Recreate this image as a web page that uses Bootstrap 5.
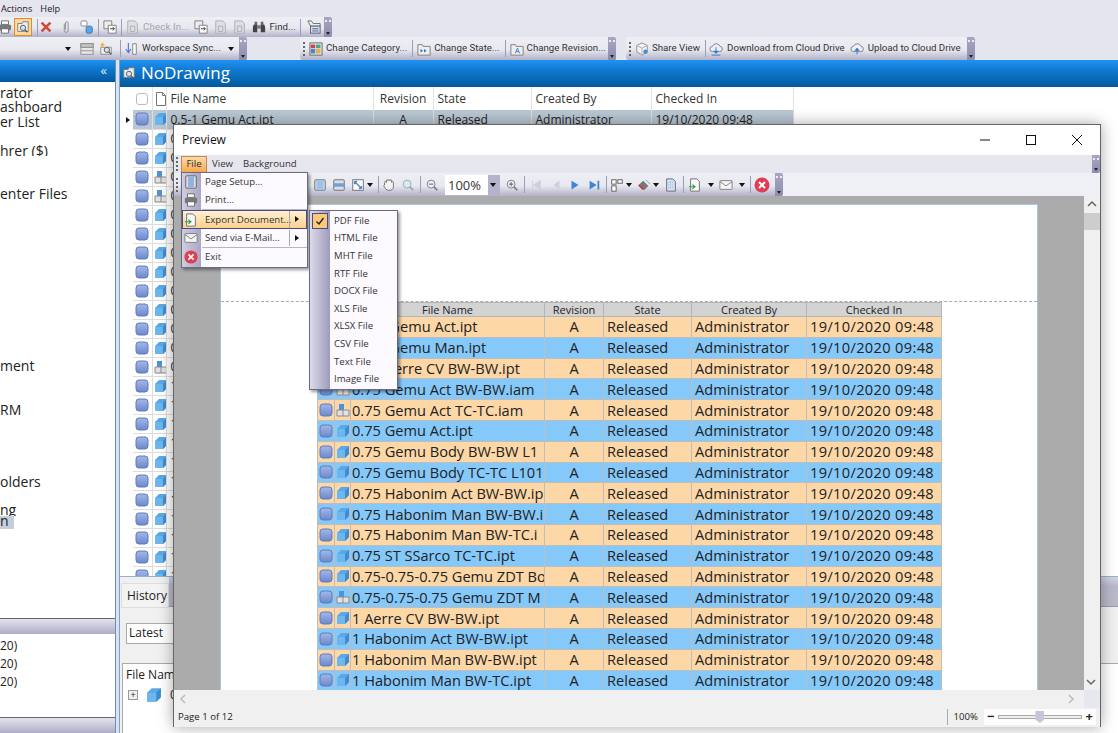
<!DOCTYPE html>
<html lang="en">
<head>
<meta charset="UTF-8">
<title>Preview</title>
<link href="https://cdn.jsdelivr.net/npm/bootstrap@5.3.3/dist/css/bootstrap.min.css" rel="stylesheet">
<style>
html, body { height: 733px; overflow: hidden; }
body { width: 1118px; background: #e5e5ef; font-family: "Open Sans", "Liberation Sans", sans-serif; font-size: 12px; color: #222; position: relative; }
svg { display: block; flex: none; }
.i16 { width: 16px; height: 16px; }
.i14 { width: 14px; height: 14px; }
.i12 { width: 12px; height: 12px; }
.i10 { width: 10px; height: 10px; }
.l1 { margin-left: 1px; } .l2 { margin-left: 2px; } .l3 { margin-left: 3px; } .l4 { margin-left: 4px; }
.l5 { margin-left: 5px; } .l6 { margin-left: 6px; } .l7 { margin-left: 7px; } .l9 { margin-left: 9px; }

/* top chrome */
.menu-top { height: 17px; font-size: 9.2px; padding-left: 1px; gap: 8px; }
.tool-row { height: 20px; }
.tool-row.second { height: 23px; }
.tbar { height: 100%; background: linear-gradient(#eeeef5 0, #e8e8f0 55%, #b3b1c9 100%); font-family: Roboto, "Liberation Sans", sans-serif; font-size: 9.7px; color: #333; white-space: nowrap; }
.tb-sep { width: 1px; height: 17px; background: #9d9db5; flex: none; }
.tb-over { width: 8px; height: 100%; background: linear-gradient(#a8a6c2, #8f8dae); position: relative; flex: none; border-radius: 0 2px 2px 0; }
.tb-over::before { content: ""; position: absolute; left: 1px; top: 3px; width: 6px; height: 2px; border-top: 2px dotted #eee; }
.tb-over::after { content: ""; position: absolute; left: 2px; bottom: 2px; border: 2px solid transparent; border-top: 3px solid #222; border-bottom: 0; }
.tb-grip { width: 2px; height: 14px; border-left: 2px dotted #666; flex: none; }
.tb-arrow { width: 0; height: 0; border: 3px solid transparent; border-top: 4px solid #111; border-bottom: 0; flex: none; }
.off { color: #a5a5a5; letter-spacing: .15px; }
.on-tool { width: 18px; height: 18px; background: #fcd9a0; border: 1px solid #e58a2c; display: flex; align-items: center; justify-content: center; flex: none; }
.bar-a { width: 332px; }
.bar-b { width: 247px; }
.bar-c { width: 316px; margin-left: 53px; border-radius: 3px 0 0 3px; }
.bar-d { width: 349px; margin-left: 10px; border-radius: 3px 0 0 3px; }
.bleed { margin-left: -2px; }
.far-in { margin-left: 65px; }
.push-end { margin-left: auto; }

/* main */
.workspace { height: 673px; background: #b9cbe0; }
.side { width: 116px; background: #fff; flex: none; border-right: 1px solid #6f8fb0; }
.blue-head { background: linear-gradient(#1f93f2 0, #0f78d0 40%, #03589c 100%); color: #fff; flex: none; }
.side-head { height: 22px; padding-right: 8px; font-size: 13px; color: #dbe9f7; }
.tree { height: 538px; overflow: hidden; font-size: 14px; padding-top: 2px; color: #222; white-space: nowrap; }
.tree div { height: 14.4px; line-height: 18px; overflow: hidden; }
.tree .picked { background: #c3d0dc; width: 14px; height: 13px; line-height: 10px; }
.lav-bar { height: 16px; background: linear-gradient(#e4e4ee, #aeacc6); border-top: 1px solid #666; flex: none; }
.recent { height: 83px; font-size: 12px; line-height: 18px; padding-top: 3px; }
.split { width: 3px; background: #d7e3f0; flex: none; }
.content { flex: 1; min-width: 0; background: #fff; border-left: 1px solid #7da0c4; }
.main-head { height: 27px; font-size: 17px; padding: 0 0 2px 2px; gap: 5px; }
.grid-zone { height: 489px; overflow: hidden; padding-left: 4px; }
.mtab { table-layout: fixed; width: 669px; font-size: 12px; }
.mtab th { font-weight: 400; height: 23px; border-right: 1px solid #e2e2e2; padding: 0 4px; color: #333; white-space: nowrap; overflow: hidden; }
.mtab td { height: 19px; padding: 0 4px; border-right: 1px solid #ddd; border-bottom: 1px solid #ddd; white-space: nowrap; overflow: hidden; line-height: 17px; }
.mtab td.ic, .mtab th.ic { padding: 0 1px; }
.mtab .rowmark { border: 0; padding: 0 2px; }
.mtab tr.sel td:not(.rowmark) { background: #b9c7d3; }
.mark-tri { width: 0; height: 0; border: 3.5px solid transparent; border-left: 4px solid #111; border-right: 0; }
.ctr { text-align: center; }
.box-blank { width: 12px; height: 12px; border: 1px solid #bbb; border-radius: 3px; margin: 0 auto; }
.hist { height: 157px; background: #f0f0f0; border-top: 1px solid #9bb0c8; position: relative; }
.hist-tabs { height: 30px; padding: 6px 0 0 1px; }
.hist-tab { width: 48px; height: 25px; background: #f3f3f3; border: 1px solid #ddd; padding-left: 5px; line-height: 24px; font-size: 12px; }
.strip { height: 30px; flex: 1; background: linear-gradient(#d5d5e2 0, #b9b9cc 30%, #b9b9cb 100%); border-bottom: 1px solid #9a9aaa; margin-top: -6px; }
.hist-select { width: 190px; height: 21px; margin: 16px 0 0 6px; background: #fff; border: 1px solid #aaa; padding-left: 2px; line-height: 18px; }
.hist-list { height: 71px; margin: 19px 0 0 2px; background: #fff; border: 1px solid #aaa; border-right: 0; padding: 2px 0 0 3px; }
.hist-row { gap: 8px; margin-top: 2px; margin-left: 2px; }
.plus-box { width: 10px; height: 10px; border: 1px solid #999; background: #eee; font-size: 9px; line-height: 7px; text-align: center; }

/* preview window, floats above the app */
.preview { left: 173px; top: 124px; width: 928px; height: 603px; background: #f0f0f0; border: 1px solid #666; border-bottom: 0; box-shadow: 0 0 14px rgba(0, 0, 0, .35); }
.win-title { height: 30px; background: #fff; font-size: 12px; padding-left: 8px; color: #111; }
.win-btn { width: 46px; justify-content: center; }
.win-menu { height: 18px; background: #e6e6ee; font-size: 9.6px; padding-left: 2px; position: relative; color: #333; }
.win-menu .grip { margin-right: 3px; }
.menu-on { width: 26px; height: 16px; background: linear-gradient(#fddba6, #f7a94f); border: 1px solid #b98b55; border-bottom: 0; text-align: center; line-height: 14px; }
.menu-word { padding: 0 5px; }
.win-menu .tb-over { position: absolute; right: 0; top: 0; height: 18px; }
.win-tools { height: 23px; background: #efeff6; }
.win-tools .tbar { width: 609px; padding-left: 2px; border-radius: 0 0 3px 0; }
.tools-first { margin-left: 135px; }
.combo { width: 55px; height: 20px; background: #fff; font-family: "Open Sans", sans-serif; font-size: 13px; line-height: 20px; padding-left: 3px; position: relative; }
.combo i { position: absolute; right: 0; top: 0; width: 12px; height: 20px; background: #b5b3cb; }
.combo i::after { content: ""; position: absolute; left: 2px; top: 8px; border: 3.5px solid transparent; border-top: 4px solid #111; border-bottom: 0; }
.viewport { height: 494px; background: #ababab; overflow: hidden; padding: 9px 0 0 47px; flex: 1; min-width: 0; }
.sheet { width: 816px; height: 600px; background: #fff; box-shadow: 0 0 0 1px #a9c4e4; }
.sheet-top { height: 97px; border-bottom: 1px dashed #aaa; }
.ptab { table-layout: fixed; width: 624px; margin-left: 96px; font-size: 14.6px; color: #222; border-left: 1px dashed #888; }
.ptab th { height: 14px; background: #d3d3d3; border: 1px solid #b5b5b5; font-size: 11px; font-weight: 400; text-align: center; line-height: 11px; padding: 0; }
.ptab td { height: 20.8px; border: 1px solid #bdbdbd; padding: 0 3px; white-space: nowrap; overflow: hidden; line-height: 19px; }
.ptab td.ic { padding: 0 1px; }
.ptab td.nm { padding: 0 0 0 1px; }
.ptab td.stamp { letter-spacing: .35px; }
.ptab tr.peach td { background: #fdd7a6; }
.ptab tr.sky td { background: #85c9fb; }
.vscroll { width: 16px; background: #f0f0f0; flex: none; position: relative; padding-top: 3px; }
.vthumb { height: 17px; background: #cdcdcd; margin-top: 4px; }
.vdown { position: absolute; bottom: 3px; left: 2px; }
.hscroll { height: 18px; background: #f0f0f0; }
.corner { width: 16px; height: 18px; background: #e6e8f0; }
.status { height: 18px; background: #f0f0f0; font-size: 9.6px; padding-left: 4px; color: #222; }
.zoom-zone { margin-left: auto; gap: 6px; padding-right: 4px; }
.zoom-vr { width: 1px; height: 16px; background: #aaa; }
.zoom-white { width: 112px; height: 16px; background: #fdfdfd; padding: 0 3px; gap: 4px; font-weight: 700; font-size: 13px; }
.track { flex: 1; height: 4px; border: 1px solid #aaa; background: #eee; position: relative; }
.thumb-z { position: absolute; left: 36px; top: -5px; width: 9px; height: 12px; background: #c6c6da; clip-path: polygon(0 0, 100% 0, 100% 70%, 50% 100%, 0 70%); }

/* drop menus */
.drop-file, .drop-export { display: block; --bs-dropdown-min-width: 0; padding: 0; margin: 0; border: 1px solid #6a6a80; border-radius: 0; background: #fcfaff; box-shadow: 2px 2px 3px rgba(0, 0, 0, .4); font-size: 9.6px; color: #333; }
.drop-file { left: 7px; top: 47px; width: 127px; height: 96px; background: linear-gradient(90deg, #cfcde0 0, #a9a7c3 19px, #fcfaff 19px); }
.drop-export { left: 135px; top: 85px; width: 89px; height: 180px; background: linear-gradient(90deg, #dcdbe8 0, #9d9bbb 20px, #fcfaff 20px); padding-top: 1px; }
.mrow { height: 18px; padding: 0 0 0 2px; gap: 7px; color: #333; position: relative; line-height: 18px; }
.mrow:hover { background: transparent; color: #333; }
.mrow.tall { height: 19px; }
.mrow.sub { height: 17.6px; padding-left: 24px; }
.mrow.hot { background: linear-gradient(#fff3d6, #fdce8c); box-shadow: inset 0 0 0 1px #4a4a8a; }
.mrow .nub { position: absolute; right: 8px; top: 6px; border: 3.5px solid transparent; border-left: 4px solid #111; border-right: 0; }
.mrow .cut { position: absolute; right: 17px; top: 1px; bottom: 1px; width: 1px; background: #aaa; }
.mline { height: 1px; background: #b5b5c5; margin-left: 20px; }
.tick { position: absolute; left: 2px; top: 1px; width: 16px; height: 16px; background: #fdc877; border: 1px solid #4a4a8a; display: flex; align-items: center; justify-content: center; }
</style>
</head>
<body class="d-flex flex-column">

<svg width="0" height="0" class="position-absolute">
  <defs>
    <linearGradient id="stGrad" x1="0" y1="0" x2="0" y2="1"><stop offset="0" stop-color="#a5b7e6"/><stop offset="1" stop-color="#6c88cc"/></linearGradient>
  </defs>
  <symbol id="st" viewBox="0 0 14 14"><rect x="1" y="1" width="12" height="12" rx="3" fill="url(#stGrad)" stroke="#5d7dbb"/></symbol>
  <symbol id="cube" viewBox="0 0 14 14"><path d="M1 5 5 1h8v8l-4 4H1z" fill="#5aa9e6"/><path d="M1 5h8v8H1z" fill="#6db7ee"/><path d="M9 5l4-4v8l-4 4z" fill="#3f8cd0"/></symbol>
  <symbol id="asm" viewBox="0 0 14 14"><rect x="3" y="1" width="5" height="6" fill="#4e93d8"/><path d="M1 7h12v6H1zM7 7v6" fill="#e2e2e2" stroke="#8a8a8a"/></symbol>
  <symbol id="doc" viewBox="0 0 14 14"><path d="M2.5.5h6l3 3v10h-9z" fill="#fff" stroke="#777"/><path d="M8.5.5v3h3" fill="none" stroke="#777"/></symbol>
  <symbol id="print" viewBox="0 0 16 16"><path d="M4 1h8v4H4z" fill="#fff" stroke="#666"/><rect x="1" y="5" width="14" height="7" rx="2" fill="#777"/><path d="M4 10h8v5H4z" fill="#fff" stroke="#666"/></symbol>
  <symbol id="find" viewBox="0 0 16 16"><path d="M2 4h5l1-2h6v11H2z" fill="#eee" stroke="#777"/><circle cx="8" cy="9" r="3" fill="#cfe3f5" stroke="#555"/><path d="M10 11l3 3" stroke="#555" stroke-width="1.5"/></symbol>
  <symbol id="redx" viewBox="0 0 16 16"><path d="M3 3l10 10M13 3 3 13" stroke="#d0483c" stroke-width="3"/></symbol>
  <symbol id="clip" viewBox="0 0 16 16"><path d="M6 4v8a2.200 2.200 0 0 0 4.400 0V3.500a1.500 1.500 0 0 0-3 0V11" fill="none" stroke="#888"/></symbol>
  <symbol id="dbl" viewBox="0 0 16 16"><rect x="1" y="1" width="7" height="6" rx="2" fill="#fff" stroke="#777"/><rect x="7" y="7" width="7" height="8" rx="2" fill="#5ba6e4" stroke="#2d6fb0"/></symbol>
  <symbol id="swap" viewBox="0 0 16 16"><path d="M1 1h9v9H1z" fill="#eee" stroke="#777"/><path d="M6 6h9v9H6z" fill="#fff" stroke="#777"/><path d="M8 10h5M11 8l2 2-2 2" stroke="#333" fill="none"/></symbol>
  <symbol id="page-off" viewBox="0 0 16 16"><path d="M2 1h8l3 3v11H2z" fill="#dedee6" stroke="#aaa"/><path d="M5 7h5v6H5z" fill="none" stroke="#aaa"/></symbol>
  <symbol id="binoc" viewBox="0 0 16 16"><path d="M2 5h4v9H1V8zM10 5h4l1 3v6h-5z" fill="#444"/><rect x="6" y="6" width="4" height="4" fill="#777"/><rect x="3" y="2" width="3" height="4" fill="#666"/><rect x="10" y="2" width="3" height="4" fill="#666"/></symbol>
  <symbol id="tray" viewBox="0 0 16 16"><path d="M1 1h4l2 3h8v3H4z" fill="#eee" stroke="#666"/><rect x="4" y="7" width="11" height="8" fill="#cfe0f0" stroke="#557"/><path d="M6 10h7M6 12.500h7" stroke="#557"/></symbol>
  <symbol id="table" viewBox="0 0 16 16"><rect x="1" y="2" width="14" height="12" fill="#e9e9e9" stroke="#888"/><path d="M1 6h14M1 10h14" stroke="#888"/><rect x="1" y="2" width="14" height="4" fill="#c5c5c5" stroke="#888"/></symbol>
  <symbol id="star" viewBox="0 0 16 16"><path d="M2 6h12v8H2z" fill="#eee" stroke="#888"/><circle cx="9" cy="9" r="3" fill="#cfe3f5" stroke="#555"/><path d="M11 11l3 3" stroke="#555" stroke-width="1.500"/><path d="M4 0l1 2 2 .5L5 4l.2 2L4 5 2.500 6l.4-2L1 2.500l2-.5z" fill="#f0b429"/></symbol>
  <symbol id="sync" viewBox="0 0 16 16"><path d="M5 1v10M2 8l3 4 3-4" fill="none" stroke="#4a7cc0" stroke-width="1.300"/><path d="M10 2h4v12h-4z" fill="#fff" stroke="#777"/></symbol>
  <symbol id="cat" viewBox="0 0 16 16"><rect x="1" y="1" width="14" height="14" fill="#ddd" stroke="#666"/><rect x="2" y="3" width="5" height="4" fill="#c44"/><rect x="8" y="3" width="5" height="4" fill="#4a8"/><rect x="2" y="8" width="5" height="5" fill="#48c"/><rect x="8" y="8" width="5" height="5" fill="#ea4"/></symbol>
  <symbol id="state" viewBox="0 0 16 16"><path d="M1 3h5l1 2h8v10H1z" fill="#eee" stroke="#777"/><path d="M4 8l3 2-3 2zM8 8l3 2-3 2z" fill="#2f78c4"/></symbol>
  <symbol id="rev" viewBox="0 0 16 16"><path d="M1 3h5l1 2h8v10H1z" fill="#eee" stroke="#777"/><path d="M6 13l2.500-6L11 13M7 11h3" fill="none" stroke="#2f78c4"/></symbol>
  <symbol id="share" viewBox="0 0 16 16"><path d="M8 1l6 3v7l-6 4-6-4V4z" fill="#f2f2f2" stroke="#888"/><path d="M8 7l6-3M8 7v8M8 7 2 4" stroke="#aaa" fill="none"/><circle cx="12" cy="11" r="2.500" fill="#3a8fd8"/></symbol>
  <symbol id="cdown" viewBox="0 0 16 16"><path d="M4 11a3 3 0 0 1 0-6 4.500 4.500 0 0 1 8.500 0 3 3 0 0 1-.5 6z" fill="#eef" stroke="#777"/><path d="M8 6v6M5.500 10 8 13l2.500-3" fill="#2a78c8" stroke="#2a78c8"/><path d="M3 15h10" stroke="#2a78c8"/></symbol>
  <symbol id="cup" viewBox="0 0 16 16"><path d="M4 11a3 3 0 0 1 0-6 4.500 4.500 0 0 1 8.500 0 3 3 0 0 1-.5 6z" fill="#eef" stroke="#777"/><path d="M8 14V8M5.500 10 8 7l2.500 3" fill="#2a78c8" stroke="#2a78c8"/></symbol>
  <symbol id="fit-w" viewBox="0 0 16 16"><rect x="2" y="2" width="12" height="12" rx="1" fill="#ddd" stroke="#666"/><rect x="4" y="2" width="8" height="12" fill="#9fc0e8"/></symbol>
  <symbol id="fit-h" viewBox="0 0 16 16"><rect x="2" y="2" width="12" height="12" rx="1" fill="#ddd" stroke="#666"/><rect x="2" y="6" width="12" height="4" fill="#6f9fe0"/></symbol>
  <symbol id="fit-a" viewBox="0 0 16 16"><rect x="2" y="2" width="12" height="12" fill="#fff" stroke="#666"/><path d="M4 4l8 8M4 4h3M4 4v3M12 12H9M12 12V9" stroke="#4a86c8" fill="none" stroke-width="1.500"/></symbol>
  <symbol id="hand" viewBox="0 0 16 16"><path d="M3 8V5a1 1 0 0 1 2 0V3a1 1 0 0 1 2 0v0a1 1 0 0 1 2 0a1 1 0 0 1 2 0v2a1 1 0 0 1 2 0v5c0 3-2 4-4 4H7c-2 0-3-2-5-5 0-1 1-1 1-1z" fill="#f4f4f4" stroke="#666"/></symbol>
  <symbol id="lens" viewBox="0 0 16 16"><circle cx="7" cy="7" r="4.500" fill="#dce8f5" stroke="#8aa"/><path d="M10 10l4 4" stroke="#8aa" stroke-width="2"/></symbol>
  <symbol id="lens-m" viewBox="0 0 16 16"><circle cx="7" cy="7" r="4.500" fill="#eef" stroke="#777"/><path d="M10 10l4 4" stroke="#777" stroke-width="2"/><path d="M4.500 7h5" stroke="#555"/></symbol>
  <symbol id="lens-p" viewBox="0 0 16 16"><circle cx="7" cy="7" r="4.500" fill="#eef" stroke="#777"/><path d="M10 10l4 4" stroke="#777" stroke-width="2"/><path d="M4.500 7h5M7 4.500v5" stroke="#555"/></symbol>
  <symbol id="first" viewBox="0 0 16 16"><path d="M4 3v10M13 3 5 8l8 5z" fill="#cfcfda" stroke="#cfcfda"/></symbol>
  <symbol id="prev" viewBox="0 0 16 16"><path d="M12 3 5 8l7 5z" fill="#cfcfda"/></symbol>
  <symbol id="next" viewBox="0 0 16 16"><path d="M4 3l8 5-8 5z" fill="#3d85d8"/></symbol>
  <symbol id="last" viewBox="0 0 16 16"><path d="M3 3l8 5-8 5zM12 3h2v10h-2z" fill="#3d85d8"/></symbol>
  <symbol id="layout" viewBox="0 0 16 16"><rect x="2" y="2" width="5" height="5" fill="#fff" stroke="#555"/><rect x="9" y="2" width="5" height="4" fill="#fff" stroke="#555"/><rect x="2" y="9" width="5" height="6" fill="#fff" stroke="#555"/></symbol>
  <symbol id="paint" viewBox="0 0 16 16"><path d="M2 8l5-5 6 6-5 5z" fill="#777"/><path d="M2 8l5 5" stroke="#c33" stroke-width="2"/><path d="M10 2l5 5" stroke="#999"/></symbol>
  <symbol id="sheetbg" viewBox="0 0 16 16"><path d="M3 1h7l3 3v11H3z" fill="#cfe0f5" stroke="#666"/><path d="M5 5h6M5 8h6M5 11h6" stroke="#8fb0dd" stroke-dasharray="1 1"/></symbol>
  <symbol id="exportdoc" viewBox="0 0 16 16"><path d="M3 1h7l3 3v11H3z" fill="#f8f8f8" stroke="#666"/><path d="M1 10h7M5 7.500 8 10l-3 2.500" stroke="#2c9e44" fill="none" stroke-width="1.300"/></symbol>
  <symbol id="mail" viewBox="0 0 16 16"><rect x="1" y="3" width="14" height="10" rx="1" fill="#f4f4f4" stroke="#777"/><path d="M1 4l7 5 7-5" fill="none" stroke="#777"/></symbol>
  <symbol id="stop" viewBox="0 0 16 16"><circle cx="8" cy="8" r="7.500" fill="#e23c50"/><path d="M5 5l6 6M11 5l-6 6" stroke="#fff" stroke-width="2"/></symbol>
  <symbol id="setup" viewBox="0 0 16 16"><rect x="2" y="1" width="12" height="14" rx="1" fill="#e5e5e5" stroke="#555"/><rect x="4.500" y="2" width="7" height="12" fill="#8fb4e4"/></symbol>
  <symbol id="chev-l" viewBox="0 0 10 10"><path d="M7 1 3 5l4 4" fill="none" stroke="#bbb" stroke-width="1.500"/></symbol>
  <symbol id="chev-r" viewBox="0 0 10 10"><path d="M3 1l4 4-4 4" fill="none" stroke="#bbb" stroke-width="1.500"/></symbol>
  <symbol id="chev-u" viewBox="0 0 10 10"><path d="M1 7l4-4 4 4" fill="none" stroke="#666" stroke-width="1.500"/></symbol>
  <symbol id="chev-d" viewBox="0 0 10 10"><path d="M1 3l4 4 4-4" fill="none" stroke="#666" stroke-width="1.500"/></symbol>
  <symbol id="check" viewBox="0 0 10 10"><path d="M1.500 5.500 4 8l4.500-6" fill="none" stroke="#222" stroke-width="1.400"/></symbol>
</svg>

<div class="menu-top d-flex align-items-center flex-none"><span>Actions</span><span>Help</span></div>

<div class="tool-row d-flex">
  <div class="tbar bar-a d-flex align-items-center">
    <svg class="i14 bleed"><use href="#print"/></svg>
    <span class="on-tool l2"><svg class="i14"><use href="#find"/></svg></span>
    <span class="tb-sep l5"></span>
    <svg class="i14 l1"><use href="#redx"/></svg>
    <svg class="i14 l6"><use href="#clip"/></svg>
    <svg class="i14 l7"><use href="#dbl"/></svg>
    <span class="tb-sep l4"></span>
    <svg class="i14 l4"><use href="#swap"/></svg>
    <span class="tb-sep l4"></span>
    <svg class="i14 l4"><use href="#page-off"/></svg>
    <span class="off l3">Check In...</span>
    <svg class="i14 l5"><use href="#swap"/></svg>
    <svg class="i14 l6"><use href="#page-off"/></svg>
    <svg class="i14 l5"><use href="#page-off"/></svg>
    <svg class="i14 l5"><use href="#binoc"/></svg>
    <span class="l3">Find...</span>
    <span class="tb-sep l4"></span>
    <svg class="i14 l6"><use href="#tray"/></svg>
    <span class="tb-over push-end"></span>
  </div>
</div>

<div class="tool-row second d-flex">
  <div class="tbar bar-b d-flex align-items-center">
    <span class="tb-arrow far-in"></span>
    <svg class="i14 l9"><use href="#table"/></svg>
    <svg class="i14 l5"><use href="#star"/></svg>
    <span class="tb-sep l7"></span>
    <svg class="i14 l3"><use href="#sync"/></svg>
    <span class="l4">Workspace Sync...</span>
    <span class="tb-arrow l7"></span>
    <span class="tb-over push-end"></span>
  </div>
  <div class="tbar bar-c d-flex align-items-center">
    <span class="tb-grip l3"></span>
    <svg class="i14 l4"><use href="#cat"/></svg>
    <span class="l3">Change Category...</span>
    <span class="tb-sep l5"></span>
    <svg class="i14 l4"><use href="#state"/></svg>
    <span class="l3">Change State...</span>
    <span class="tb-sep l5"></span>
    <svg class="i14 l4"><use href="#rev"/></svg>
    <span class="l3">Change Revision...</span>
    <span class="tb-over push-end"></span>
  </div>
  <div class="tbar bar-d d-flex align-items-center">
    <span class="tb-grip l3"></span>
    <svg class="i14 l4"><use href="#share"/></svg>
    <span class="l3">Share View</span>
    <span class="tb-sep l5"></span>
    <svg class="i14 l3"><use href="#cdown"/></svg>
    <span class="l4">Download from Cloud Drive</span>
    <svg class="i14 l5"><use href="#cup"/></svg>
    <span class="l4">Upload to Cloud Drive</span>
    <span class="tb-over push-end"></span>
  </div>
</div>

<div class="workspace d-flex">
  <aside class="side d-flex flex-column">
    <div class="blue-head side-head d-flex align-items-center justify-content-end">&laquo;</div>
    <div class="tree" id="tree"></div>
    <div class="lav-bar"></div>
    <div class="recent"><div>20)</div><div>20)</div><div>20)</div></div>
    <div class="lav-bar"></div>
  </aside>
  <div class="split"></div>
  <section class="content d-flex flex-column">
    <div class="blue-head main-head d-flex align-items-center">
      <svg class="i14"><use href="#find"/></svg>
      <span>NoDrawing</span>
    </div>
    <div class="grid-zone">
      <table class="mtab">
        <colgroup><col width="9"><col width="19"><col width="14"><col width="207"><col width="60"><col width="98"><col width="120"><col width="142"></colgroup>
        <thead><tr>
          <th class="rowmark"></th>
          <th class="ic"><div class="box-blank"></div></th>
          <th class="ic"><svg class="i14"><use href="#doc"/></svg></th>
          <th>File Name</th><th class="ctr">Revision</th><th>State</th><th>Created By</th><th>Checked In</th>
        </tr></thead>
        <tbody id="mainRows"></tbody>
      </table>
    </div>
    <div class="hist">
      <div class="hist-tabs d-flex"><div class="hist-tab">History</div><div class="strip"></div></div>
      <div class="hist-select">Latest</div>
      <div class="hist-list">
        <div>File Name</div>
        <div class="hist-row d-flex align-items-center">
          <div class="plus-box">+</div>
          <svg class="i16"><use href="#cube"/></svg>
          <span>0.</span>
        </div>
      </div>
    </div>
  </section>
</div>

<div class="preview position-absolute d-flex flex-column">
  <div class="win-title d-flex align-items-center">
    <span>Preview</span>
    <div class="d-flex ms-auto align-items-center">
      <span class="win-btn d-flex"><svg class="i10" viewBox="0 0 10 10"><path d="M0 5h10" stroke="#111"/></svg></span>
      <span class="win-btn d-flex"><svg class="i10" viewBox="0 0 10 10"><rect x=".5" y=".5" width="9" height="9" fill="none" stroke="#111"/></svg></span>
      <span class="win-btn d-flex"><svg class="i10" viewBox="0 0 10 10"><path d="M0 0l10 10M10 0 0 10" stroke="#111"/></svg></span>
    </div>
  </div>
  <div class="win-menu d-flex align-items-center">
    <span class="tb-grip grip"></span>
    <span class="menu-on">File</span>
    <span class="menu-word">View</span>
    <span class="menu-word">Background</span>
    <span class="tb-over"></span>
  </div>
  <div class="win-tools d-flex">
    <div class="tbar d-flex align-items-center">
      <span class="tb-grip"></span>
      <svg class="i14 tools-first"><use href="#fit-w"/></svg>
      <svg class="i14 l5"><use href="#fit-h"/></svg>
      <svg class="i14 l5"><use href="#fit-a"/></svg>
      <span class="tb-arrow l2"></span>
      <span class="tb-sep l5"></span>
      <svg class="i14 l3"><use href="#hand"/></svg>
      <svg class="i14 l5"><use href="#lens"/></svg>
      <span class="tb-sep l5"></span>
      <svg class="i14 l4"><use href="#lens-m"/></svg>
      <div class="combo l6">100%<i></i></div>
      <svg class="i14 l5"><use href="#lens-p"/></svg>
      <span class="tb-sep l5"></span>
      <svg class="i14 l4"><use href="#first"/></svg>
      <svg class="i14 l6"><use href="#prev"/></svg>
      <svg class="i14 l5"><use href="#next"/></svg>
      <svg class="i14 l5"><use href="#last"/></svg>
      <span class="tb-sep l5"></span>
      <svg class="i14 l3"><use href="#layout"/></svg>
      <span class="tb-arrow l2"></span>
      <svg class="i14 l5"><use href="#paint"/></svg>
      <span class="tb-arrow l2"></span>
      <svg class="i14 l5"><use href="#sheetbg"/></svg>
      <span class="tb-sep l5"></span>
      <svg class="i14 l4"><use href="#exportdoc"/></svg>
      <span class="tb-arrow l6"></span>
      <svg class="i14 l5"><use href="#mail"/></svg>
      <span class="tb-arrow l6"></span>
      <span class="tb-sep l5"></span>
      <svg class="i16 l3"><use href="#stop"/></svg>
      <span class="tb-over push-end"></span>
    </div>
  </div>
  <div class="d-flex">
    <div class="viewport">
      <div class="sheet">
        <div class="sheet-top"></div>
        <table class="ptab">
          <colgroup><col width="17"><col width="16"><col width="194"><col width="59"><col width="88"><col width="115"><col width="135"></colgroup>
          <thead><tr><th colspan="2"></th><th>File Name</th><th>Revision</th><th>State</th><th>Created By</th><th>Checked In</th></tr></thead>
          <tbody id="prevRows"></tbody>
        </table>
      </div>
    </div>
    <div class="vscroll">
      <svg class="i10 mx-auto"><use href="#chev-u"/></svg>
      <div class="vthumb"></div>
      <svg class="i10 vdown"><use href="#chev-d"/></svg>
    </div>
  </div>
  <div class="hscroll d-flex align-items-center ps-1">
    <svg class="i10"><use href="#chev-l"/></svg>
    <svg class="i10 ms-auto me-2"><use href="#chev-r"/></svg>
    <span class="corner"></span>
  </div>
  <div class="status d-flex align-items-center">
    <span>Page 1 of 12</span>
    <div class="zoom-zone d-flex align-items-center">
      <span class="zoom-vr"></span>
      <span>100%</span>
      <div class="zoom-white d-flex align-items-center"><span>&minus;</span><div class="track"><span class="thumb-z"></span></div><span>+</span></div>
    </div>
  </div>

  <div class="dropdown-menu show position-absolute drop-file">
    <div class="dropdown-item mrow d-flex align-items-center"><svg class="i14"><use href="#setup"/></svg><span>Page Setup...</span></div>
    <div class="dropdown-item mrow d-flex align-items-center"><svg class="i14"><use href="#print"/></svg><span>Print...</span></div>
    <div class="mline"></div>
    <div class="dropdown-item mrow tall hot d-flex align-items-center"><svg class="i14"><use href="#exportdoc"/></svg><span>Export Document...</span><i class="cut"></i><i class="nub"></i></div>
    <div class="dropdown-item mrow d-flex align-items-center"><svg class="i14"><use href="#mail"/></svg><span>Send via E-Mail...</span><i class="cut"></i><i class="nub"></i></div>
    <div class="mline"></div>
    <div class="dropdown-item mrow d-flex align-items-center"><svg class="i14"><use href="#stop"/></svg><span>Exit</span></div>
  </div>
  <div class="dropdown-menu show position-absolute drop-export" id="exportMenu"></div>
</div>

<script>
  const treeLines = { 0: "rator", 1: "ashboard", 2: "er List", 4: "hrer ($)", 7: "enter Files", 19: "ment", 22: "RM", 27: "olders", 29: "ng" };
  const tree = document.getElementById("tree");
  for (let i = 0; i < 37; i++) {
    const line = document.createElement("div");
    line.textContent = treeLines[i] || "\u00a0";
    tree.appendChild(line);
  }
  const picked = document.createElement("div");
  picked.className = "picked";
  picked.textContent = "n";
  tree.children[30].replaceWith(picked);

  const files = ["0.5-1 Gemu Act.ipt", "0.5-1 Gemu Man.ipt", "0.75 Aerre CV BW-BW.ipt", "0.75 Gemu Act BW-BW.iam", "0.75 Gemu Act TC-TC.iam",
    "0.75 Gemu Act.ipt", "0.75 Gemu Body BW-BW L1", "0.75 Gemu Body TC-TC L101", "0.75 Habonim Act BW-BW.ip", "0.75 Habonim Man BW-BW.i",
    "0.75 Habonim Man BW-TC.i", "0.75 ST SSarco TC-TC.ipt", "0.75-0.75-0.75 Gemu ZDT Bo", "0.75-0.75-0.75 Gemu ZDT M", "1 Aerre CV BW-BW.ipt",
    "1 Habonim Act BW-BW.ipt", "1 Habonim Man BW-BW.ipt", "1 Habonim Man BW-TC.ipt"];
  const assemblies = [3, 4, 13];
  const when = "19/10/2020 09:48";
  const iconFor = i => assemblies.includes(i) ? "#asm" : "#cube";
  const ic = (id, size) => '<svg class="' + size + ' mx-auto"><use href="' + id + '"/></svg>';

  // only the first row of the grid shows past the preview window
  let mainHtml = "";
  for (let i = 0; i < 26; i++) {
    const first = i === 0;
    const name = first ? files[0] : (i < 14 ? "0" : "1");
    mainHtml += '<tr class="' + (first ? "sel" : "") + '"><td class="rowmark">' + (first ? '<div class="mark-tri"></div>' : "") + '</td>' +
      '<td class="ic">' + ic("#st", "i14") + '</td><td class="ic">' + ic(iconFor(i), "i14") + '</td>' +
      '<td>' + name + '</td><td class="ctr">' + (first ? "A" : "") + '</td><td>' + (first ? "Released" : "") + '</td><td>' + (first ? "Administrator" : "") + '</td><td>' + (first ? when : "") + '</td></tr>';
  }
  document.getElementById("mainRows").innerHTML = mainHtml;

  let prevHtml = "";
  for (let i = 0; i < 18; i++) {
    prevHtml += '<tr class="' + (i % 2 ? "sky" : "peach") + '"><td class="ic">' + ic("#st", "i14") + '</td><td class="ic">' + ic(iconFor(i), "i14") + '</td>' +
      '<td class="nm">' + files[i] + '</td><td class="ctr">A</td><td>Released</td><td>Administrator</td><td class="stamp">' + when + '</td></tr>';
  }
  document.getElementById("prevRows").innerHTML = prevHtml;

  const formats = ["PDF File", "HTML File", "MHT File", "RTF File", "DOCX File", "XLS File", "XLSX File", "CSV File", "Text File", "Image File"];
  document.getElementById("exportMenu").innerHTML = formats.map((f, i) =>
    '<div class="dropdown-item mrow sub d-flex align-items-center">' +
    (i === 0 ? '<span class="tick"><svg class="i10"><use href="#check"/></svg></span>' : "") + '<span>' + f + '</span></div>').join("");
</script>
<script src="https://cdn.jsdelivr.net/npm/bootstrap@5.3.3/dist/js/bootstrap.bundle.min.js"></script>
</body>
</html>
